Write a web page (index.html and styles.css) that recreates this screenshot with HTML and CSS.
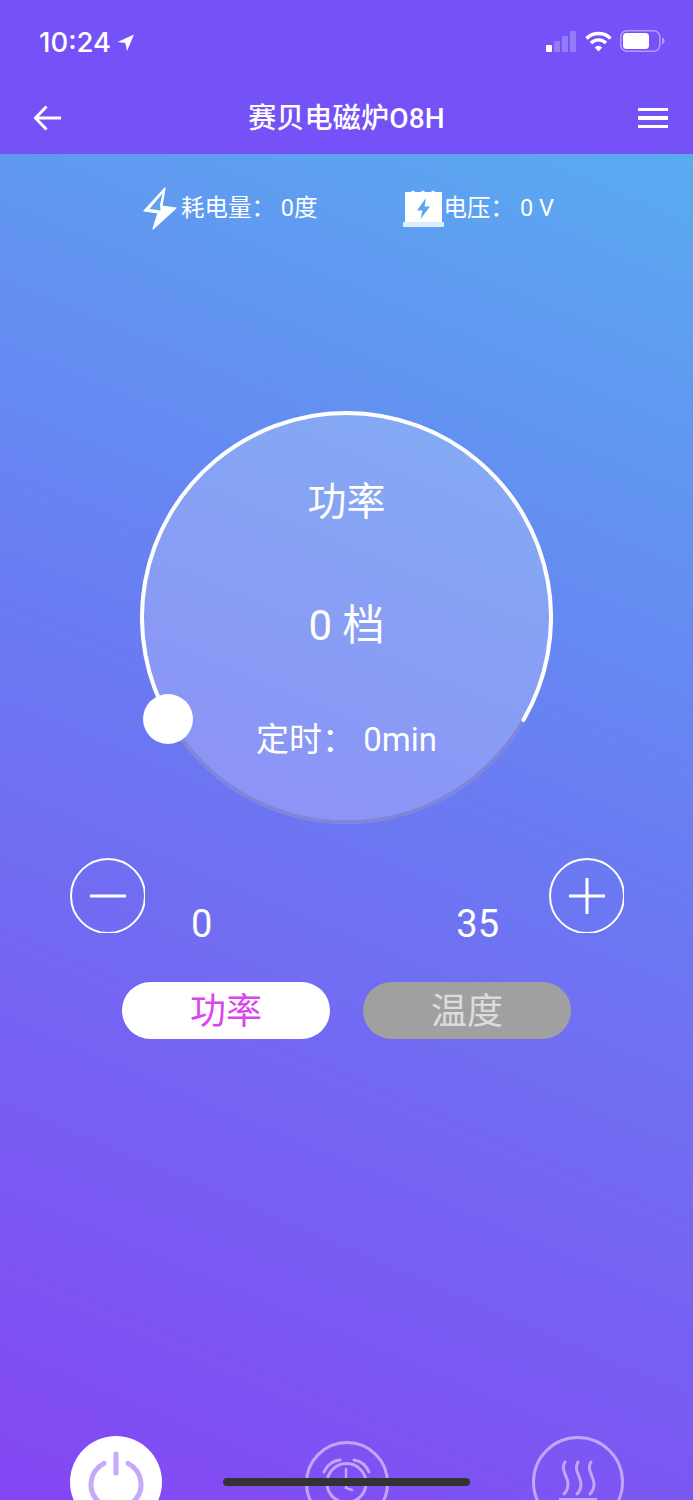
FILE: index.html
```html
<!DOCTYPE html>
<html lang="en">
<head>
  <meta charset="UTF-8" />
  <meta name="viewport" content="width=device-width, initial-scale=1.0"/>
  <title>赛贝电磁炉O8H</title>
  <link rel="stylesheet" href="styles.css">
</head>
<body>
<div class="page">
  <!-- Status bar + title -->
  <header class="top">
    <div class="status">
      <div class="clock">
        <span>10:24</span>
        <svg class="locate" viewBox="0 0 16 16"><path d="M16 .5 L.5 7.5 L7.8 8.4 L9.5 16 Z" fill="#fff"/></svg>
      </div>
      <div class="status-icons">
        <svg width="31" height="21" viewBox="0 0 31 21">
          <rect x="0" y="14" width="6" height="7" rx="1" fill="#fff"/>
          <rect x="8" y="10" width="6" height="11" rx="1" fill="#fff" opacity=".25"/>
          <rect x="16" y="5" width="6" height="16" rx="1" fill="#fff" opacity=".25"/>
          <rect x="24" y="0" width="6" height="21" rx="1" fill="#fff" opacity=".25"/>
        </svg>
        <svg width="27" height="21" viewBox="0 0 27 21" fill="none" stroke="#fff" stroke-width="3.4">
          <path d="M1.5 7.5 A17 17 0 0 1 25.5 7.5"/>
          <path d="M6 12 A10.6 10.6 0 0 1 21 12"/>
          <path d="M13.5 20.5 L9.8 16.4 A5.2 5.2 0 0 1 17.2 16.4 Z" fill="#fff" stroke="none"/>
        </svg>
        <svg width="45" height="22" viewBox="0 0 45 22">
          <rect x=".8" y=".8" width="39" height="20.4" rx="6" fill="none" stroke="#fff" stroke-opacity=".45" stroke-width="1.5"/>
          <rect x="3" y="3" width="26" height="16" rx="3.5" fill="#fff"/>
          <path d="M42 7.5 C44 8.2 44.6 9.5 44.6 11 C44.6 12.5 44 13.8 42 14.5 Z" fill="#fff" opacity=".45"/>
        </svg>
      </div>
    </div>
    <nav class="nav">
      <svg class="back" viewBox="0 0 30 28" fill="none" stroke="#fff" stroke-width="3"><path d="M14 2 L2.5 14 L14 26 M3 14 H29"/></svg>
      <h1>赛贝电磁炉O8H</h1>
      <div class="menu"><i></i><i></i><i></i></div>
    </nav>
  </header>

  <main>
    <div class="metrics">
      <div class="metric first">
        <svg class="bolt" viewBox="0 0 34 43">
          <path d="M22 1 L1 24 L15 26 L10 42 L33 21 L19 19 Z" fill="#fff" stroke="#fff" stroke-width="1.2" stroke-linejoin="round"/>
          <path d="M19.5 6.5 L6.5 22 L17.5 23.5 L17 17.5 Z" fill="#5ea5ee"/>
        </svg>
        <span>耗电量： 0度</span>
      </div>
      <div class="metric">
        <svg class="cell" viewBox="0 0 41 39">
          <path d="M2 3 H8 Q10 0 12 3 H18 Q20 0 22 3 H28 Q30 0 32 3 H39 V33 H2 Z" fill="#fff"/>
          <rect x="0" y="33" width="41" height="5" fill="#dcecfb"/>
          <path d="M23 9 L14 21.5 H19.5 L17.5 30 L27 17.5 H21.5 Z" fill="#5ea5ee"/>
        </svg>
        <span>电压： 0 V</span>
      </div>
    </div>

    <div class="dial">
      <svg class="ring" viewBox="0 0 413 413" fill="none">
        <path d="M29.5 309 A204.5 204.5 0 0 0 383.5 309" stroke="#7f86d8" stroke-width="3.5"/>
        <path d="M29.5 309 A204.5 204.5 0 1 1 383.5 309" stroke="#fff" stroke-width="4" stroke-linecap="round"/>
      </svg>
      <div class="knob"></div>
      <p class="dial-title">功率</p>
      <p class="dial-level">0 档</p>
      <p class="dial-timer">定时： 0min</p>
    </div>

    <div class="adjust">
      <button class="round">
        <svg viewBox="0 0 75 75" fill="none" stroke="#fff"><circle cx="38" cy="38" r="37" stroke-width="2"/><path d="M20 38 H56" stroke-width="3"/></svg>
      </button>
      <div class="range"><span>0</span><span>35</span></div>
      <button class="round">
        <svg viewBox="0 0 75 75" fill="none" stroke="#fff"><circle cx="38" cy="38" r="37" stroke-width="2"/><path d="M20 38 H56 M38 20 V56" stroke-width="3"/></svg>
      </button>
    </div>

    <div class="tabs">
      <button class="tab on">功率</button>
      <button class="tab">温度</button>
    </div>

    <div class="bottom">
      <div class="action power">
        <svg viewBox="0 0 92 92" fill="none" stroke="#c6a9f9" stroke-width="5" stroke-linecap="round">
          <path d="M46 18 V37"/>
          <path d="M34 27.4 A25 24 0 1 0 58 27.4"/>
        </svg>
      </div>
      <div class="action timer">
        <svg viewBox="0 0 84 84" fill="none" stroke="#c0a6f8" stroke-linecap="round">
          <circle cx="42" cy="42" r="40.5" stroke-width="3"/>
          <circle cx="41.5" cy="42" r="19.5" stroke-width="3"/>
          <path d="M41 28 V47 L47 49" stroke-width="2.4"/>
          <path d="M19 31 A20 20 0 0 1 35 19 M49 19 A20 20 0 0 1 64 31" stroke-width="3"/>
        </svg>
      </div>
      <div class="action steam">
        <svg viewBox="0 0 92 92" fill="none" stroke="#c0a6f8" stroke-linecap="round">
          <circle cx="46" cy="46" r="44.5" stroke-width="3"/>
          <path d="M33 26 C28 34 36 40 36 48 C36 52 34 56 32 58" stroke-width="3"/>
          <path d="M46 26 C41 34 49 40 49 48 C49 52 47 56 45 58" stroke-width="3"/>
          <path d="M59 26 C54 34 62 40 62 48 C62 52 60 56 58 58" stroke-width="3"/>
          <path d="M27 64 H65" stroke-width="4" stroke-linecap="butt"/>
        </svg>
      </div>
    </div>
  </main>

  <div class="home-bar"></div>
</div>
</body>
</html>
```

FILE: styles.css
```css
* {
  box-sizing: border-box;
}

body {
  margin: 0;
  font-family: "Roboto", "Noto Sans CJK SC", sans-serif;
  color: #fff;
}

p, h1 {
  margin: 0;
  font-weight: 400;
}

.page {
  position: relative;
  width: 693px;
  height: 1500px;
  overflow: hidden;
  display: flex;
  flex-direction: column;
}

.top {
  height: 154px;
  flex-shrink: 0;
  background: #7551f8;
}

.status {
  height: 82px;
  padding: 24px 28px 0 39px;
  display: flex;
  justify-content: space-between;
  align-items: flex-start;
}

.clock {
  display: flex;
  align-items: center;
  gap: 6px;
  font-family: "Inter", sans-serif;
  font-size: 27.5px;
  font-weight: 500;
  line-height: 36px;
}

.locate {
  width: 17px;
  height: 17px;
}

.status-icons {
  display: flex;
  align-items: center;
  gap: 8px;
  padding: 6px 0 0;
}

.nav {
  height: 72px;
  padding: 0 25px;
  display: grid;
  grid-template-columns: 1fr auto 1fr;
  align-items: center;
}

.back {
  width: 29px;
  height: 28px;
  margin-left: 8px;
}

.nav h1 {
  padding-bottom: 4px;
  font-size: 28px;
  font-weight: 500;
  letter-spacing: .2px;
}

.menu {
  width: 30px;
  justify-self: end;
  display: flex;
  flex-direction: column;
  gap: 5px;
}

.menu i {
  display: block;
  height: 3.5px;
  background: #fff;
}

main {
  flex: 1;
  min-height: 0;
  background: linear-gradient(203deg, #5aabf0 0%, #6a7bf2 45%, #8446f3 100%);
  display: flex;
  flex-direction: column;
  align-items: center;
}

.metrics {
  width: 100%;
  height: 108px;
  padding: 0 0 0 143px;
  display: flex;
  align-items: center;
  gap: 85px;
}

.metric {
  display: flex;
  align-items: center;
  font-size: 23.5px;
}

.metric.first {
  gap: 4px;
}

.metric span {
  padding-bottom: 4px;
  white-space: nowrap;
}

.bolt {
  width: 34px;
  height: 43px;
}

.cell {
  width: 41px;
  height: 39px;
}

/* Power dial */
.dial {
  position: relative;
  width: 413px;
  height: 413px;
  margin-top: 149px;
  border-radius: 50%;
  background: rgba(255, 255, 255, .22);
  display: flex;
  flex-direction: column;
  align-items: center;
}

.ring {
  position: absolute;
  inset: 0;
}

.knob {
  position: absolute;
  left: 3px;
  top: 283px;
  width: 50px;
  height: 50px;
  border-radius: 50%;
  background: #fff;
}

.dial-title {
  margin-top: 63px;
  font-size: 39px;
  line-height: 56px;
}

.dial-level {
  margin-top: 66px;
  font-size: 42px;
  line-height: 60px;
}

.dial-timer {
  margin-top: 60px;
  font-size: 33px;
  line-height: 48px;
}

.adjust {
  width: 100%;
  margin-top: 34px;
  padding: 0 69px 0 70px;
  display: flex;
  justify-content: space-between;
}

.round {
  width: 75px;
  height: 75px;
  padding: 0;
  border: none;
  background: none;
}

.round svg {
  display: block;
  width: 75px;
  height: 75px;
}

.range {
  flex: 1;
  height: 92px;
  padding: 40px 50px 0 46px;
  display: flex;
  justify-content: space-between;
  font-size: 38px;
  line-height: 52px;
}

.tabs {
  margin-top: 32px;
  display: flex;
  gap: 33px;
}

.tab {
  width: 208px;
  height: 57px;
  padding: 0 0 4px;
  border: none;
  border-radius: 29px;
  background: #a0a0a0;
  color: #dcdcdc;
  font-family: "Noto Sans CJK SC", sans-serif;
  font-size: 36px;
  line-height: 53px;
}

.tab.on {
  background: #fff;
  color: #d946ee;
}

.bottom {
  width: 100%;
  margin-top: auto;
  height: 64px;
  padding: 0 69px 0 70px;
  display: flex;
  justify-content: space-between;
  align-items: flex-start;
}

.action {
  flex-shrink: 0;
  border-radius: 50%;
}

.action svg {
  display: block;
  width: 100%;
  height: 100%;
}

.power {
  width: 92px;
  height: 92px;
  background: #fff;
}

.timer {
  width: 84px;
  height: 84px;
  margin-top: 5px;
}

.steam {
  width: 92px;
  height: 92px;
}

.home-bar {
  position: absolute;
  left: 223px;
  top: 1478px;
  width: 247px;
  height: 8px;
  border-radius: 4px;
  background: #333;
}
```
